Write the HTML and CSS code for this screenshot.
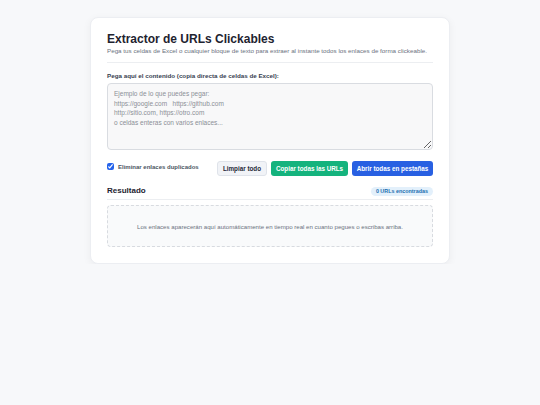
FILE: index.html
```html
<!DOCTYPE html>
<html lang="es">
<head>
<meta charset="utf-8">
<title>Extractor de URLs Clickables</title>
<link rel="stylesheet" href="styles.css">
</head>
<body>
<main class="card">
  <header class="head">
    <h1 class="title">Extractor de URLs Clickables</h1>
    <p class="subtitle">Pega tus celdas de Excel o cualquier bloque de texto para extraer al instante todos los enlaces de forma clickeable.</p>
  </header>
  <label class="label" for="input">Pega aquí el contenido (copia directa de celdas de Excel):</label>
  <textarea id="input" class="input" placeholder="Ejemplo de lo que puedes pegar:
https://google.com   https://github.com
http://sitio.com, https://otro.com
o celdas enteras con varios enlaces..."></textarea>
  <div class="controls">
    <label class="check"><input type="checkbox" checked> Eliminar enlaces duplicados</label>
    <div class="buttons">
      <button class="btn btn-light">Limpiar todo</button>
      <button class="btn btn-green">Copiar todas las URLs</button>
      <button class="btn btn-blue">Abrir todas en pestañas</button>
    </div>
  </div>
  <div class="result-head">
    <h2 class="result-title">Resultado</h2>
    <span class="badge">0 URLs encontradas</span>
  </div>
  <div class="empty">Los enlaces aparecerán aquí automáticamente en tiempo real en cuanto pegues o escribas arriba.</div>
</main>
</body>
</html>
```

FILE: styles.css
```css
* { box-sizing: border-box; }
html, body { margin: 0; padding: 0; }
body {
  background: #f7f8fa;
  font-family: "Liberation Sans", Arial, sans-serif;
  color: #1f2937;
  padding-top: 17px;
}
.card {
  width: 360px;
  margin: 0 auto;
  background: #fff;
  border: 1px solid #eceef2;
  border-radius: 8px;
  box-shadow: 0 2px 8px rgba(15, 23, 42, 0.05);
  padding: 14px 16px 16px;
}
.head {
  border-bottom: 1px solid #eceef1;
  padding-bottom: 7px;
  margin-bottom: 9px;
}
.title {
  margin: 0;
  font-size: 12px;
  font-weight: 700;
  color: #1e2330;
  line-height: 15px;
}
.subtitle {
  margin: 0;
  font-size: 6.25px;
  color: #6b7280;
  line-height: 8px;
}
.label {
  display: block;
  font-size: 6.25px;
  font-weight: 700;
  color: #374151;
  line-height: 8px;
  margin-bottom: 3px;
}
.input {
  display: block;
  width: 100%;
  height: 67px;
  background: #f8f8f9;
  border: 1px solid #d9dce1;
  border-radius: 4px;
  padding: 5px 6px;
  font-family: "Liberation Sans", Arial, sans-serif;
  font-size: 6.5px;
  line-height: 9.6px;
  resize: vertical;
  margin: 0;
}
.input::placeholder { color: #8b8f96; }
.controls {
  display: flex;
  justify-content: space-between;
  align-items: flex-start;
  margin-top: 11px;
}
.check {
  display: flex;
  align-items: center;
  gap: 4px;
  font-size: 6px;
  font-weight: 700;
  color: #4b5563;
  margin-top: 2px;
}
.check input {
  margin: 0;
  width: 7px;
  height: 7px;
  accent-color: #2563eb;
}
.buttons { display: flex; gap: 4px; }
.btn {
  height: 15px;
  border-radius: 3px;
  font-family: "Liberation Sans", Arial, sans-serif;
  font-size: 6.3px;
  font-weight: 700;
  padding: 0;
  white-space: nowrap;
  text-align: center;
  border: 1px solid transparent;
  line-height: 13px;
}
.btn-light { background: #f1f3f7; border-color: #dfe3ea; color: #1f2937; width: 50px; }
.btn-green { background: #14b37d; color: #fff; width: 77px; }
.btn-blue { background: #2860e2; color: #fff; width: 81px; }
.result-head {
  display: flex;
  justify-content: space-between;
  align-items: center;
  margin-top: 10px;
  padding-bottom: 3px;
  border-bottom: 1px solid #eceef1;
}
.result-title {
  margin: 0;
  font-size: 8px;
  line-height: 10px;
  font-weight: 700;
  color: #1e2330;
}
.badge {
  background: #e3f0fb;
  color: #1d6fb0;
  font-size: 5.4px;
  font-weight: 700;
  padding: 0 5px;
  height: 9px;
  line-height: 9px;
  border-radius: 5px;
}
.empty {
  margin-top: 5px;
  height: 42px;
  border: 1px dashed #d8dbe0;
  border-radius: 4px;
  background: #f9fafb;
  display: flex;
  align-items: center;
  justify-content: center;
  font-size: 6.1px;
  color: #6b7280;
}
```
